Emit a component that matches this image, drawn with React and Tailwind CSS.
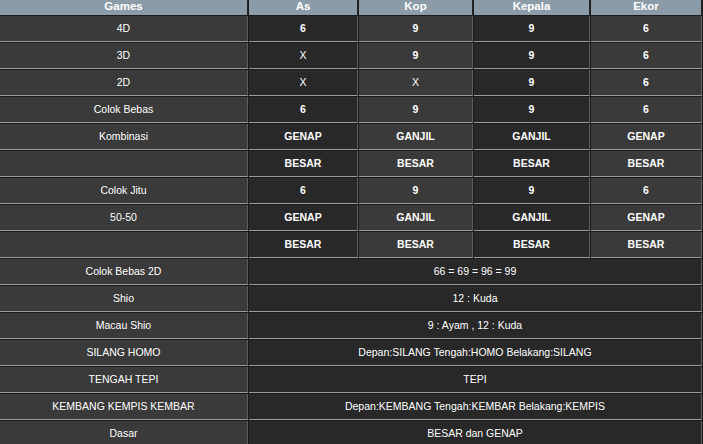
import React from 'react';

const headers = ['Games', 'As', 'Kop', 'Kepala', 'Ekor'];

const rows = [
  { label: '4D', values: ['6', '9', '9', '6'] },
  { label: '3D', values: ['X', '9', '9', '6'] },
  { label: '2D', values: ['X', 'X', '9', '6'] },
  { label: 'Colok Bebas', values: ['6', '9', '9', '6'] },
  { label: 'Kombinasi', values: ['GENAP', 'GANJIL', 'GANJIL', 'GENAP'] },
  { label: '', values: ['BESAR', 'BESAR', 'BESAR', 'BESAR'] },
  { label: 'Colok Jitu', values: ['6', '9', '9', '6'] },
  { label: '50-50', values: ['GENAP', 'GANJIL', 'GANJIL', 'GENAP'] },
  { label: '', values: ['BESAR', 'BESAR', 'BESAR', 'BESAR'] },
  { label: 'Colok Bebas 2D', text: '66 = 69 = 96 = 99' },
  { label: 'Shio', text: '12 : Kuda' },
  { label: 'Macau Shio', text: '9 : Ayam , 12 : Kuda' },
  { label: 'SILANG HOMO', text: 'Depan:SILANG Tengah:HOMO Belakang:SILANG' },
  { label: 'TENGAH TEPI', text: 'TEPI' },
  { label: 'KEMBANG KEMPIS KEMBAR', text: 'Depan:KEMBANG Tengah:KEMBAR Belakang:KEMPIS' },
  { label: 'Dasar', text: 'BESAR dan GENAP' },
];

const cell = 'h-[26px] flex items-center justify-center border-b border-r border-b-[#9a9a9a] border-r-[#5e5e5e] text-white text-[10.5px]';

const App = () => {
  return (
    <div className="w-[703px] h-[444px] overflow-hidden bg-[#1b1b1b]" style={{ fontFamily: '"Liberation Sans", Arial, sans-serif' }}>
      <div className="-mt-[8px] -ml-[1px] grid grid-cols-[248px_109px_114px_116px_111px] gap-[1px] p-[1px]">
        {headers.map((h) => (
          <div
            key={h}
            className="h-[22px] flex items-end justify-center pb-[2px] leading-[14px] bg-[#8b9ca8] border-r border-r-[#262626] text-white text-[11.5px] font-bold"
          >
            {h}
          </div>
        ))}
        {rows.map((row, i) => (
          <React.Fragment key={i}>
            <div className={`${cell} bg-[#3a3a3a]`}>{row.label}</div>
            {row.values ? (
              row.values.map((v, j) => (
                <div
                  key={j}
                  className={`${cell} ${v === 'X' ? 'font-normal' : 'font-bold'} ${j % 2 === 0 ? 'bg-[#282828]' : 'bg-[#3a3a3a]'}`}
                >
                  {v}
                </div>
              ))
            ) : (
              <div className={`${cell} col-span-4 bg-[#282828]`}>{row.text}</div>
            )}
          </React.Fragment>
        ))}
      </div>
    </div>
  );
};

export default App;
